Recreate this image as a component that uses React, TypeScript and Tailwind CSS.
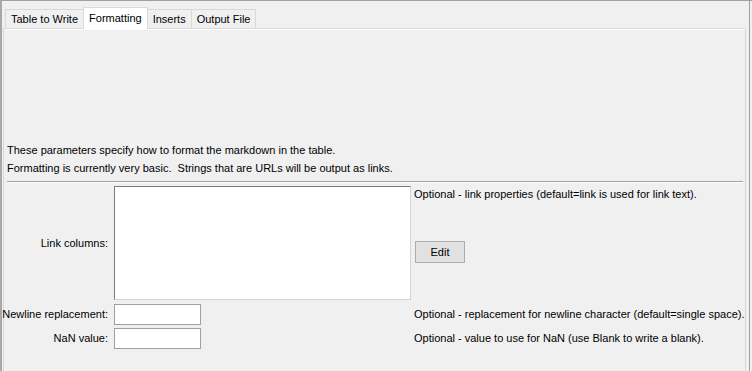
import React from 'react';

const font = { fontFamily: '"Liberation Sans", Arial, sans-serif' };

export default function App() {
  const tabs = ['Table to Write', 'Formatting', 'Inserts', 'Output File'];
  return (
    <div className="w-[752px] h-[371px] bg-[#f0f0f0] text-[11px] text-black overflow-hidden border-t border-[#a0a0a0] border-l-2 border-l-[#a8a8a8] relative whitespace-nowrap" style={font}>
      <div className="absolute right-[2px] top-0 bottom-0 w-px bg-[#a0a0a0]" />
      <div className="pl-px pr-[6px] pt-[6px]">
        {/* tab strip */}
        <div className="flex items-end h-[21px] pl-[2px]">
          {tabs.map((t, i) =>
            i === 1 ? (
              <div key={t} className="h-[22px] px-[5px] bg-white border border-b-0 border-[#d9d9d9] -mb-px -ml-px relative z-10 flex items-start pt-[3px] leading-[14px]">
                {t}
              </div>
            ) : (
              <div key={t} className="h-[19px] px-[5px] bg-[#f0f0f0] border border-b-0 border-[#d9d9d9] -ml-px first:ml-0 flex items-center leading-[14px]">
                {t}
              </div>
            )
          )}
        </div>
        {/* panel */}
        <div className="border border-[#d9d9d9] border-b-0 h-[345px]">
          <div className="border-t border-white h-full pl-[3px] pr-[2px]">
            <div className="h-[111px]" />
            <div className="leading-[18px]">
              <div>These parameters specify how to format the markdown in the table.</div>
              <div>Formatting is currently very basic.&nbsp; Strings that are URLs will be output as links.</div>
            </div>
            <div className="mt-[4px] h-[2px] bg-[#a0a0a0] border-b border-white" />
            <div className="grid grid-cols-[102px_299px_1fr] gap-x-[3px] mt-[3px]">
              <div className="flex items-center justify-end mr-px">Link columns:</div>
              <div className="h-[114px] bg-white border border-[#7a7a7a] border-r-[#d4d4d4] border-b-[#d4d4d4] ml-[2px]" />
              <div className="flex flex-col items-start">
                <div className="leading-[14px] mt-px">Optional - link properties (default=link is used for link text).</div>
                <button className="mt-[40px] ml-px w-[50px] h-[22px] bg-[#e1e1e1] border border-[#adadad]">Edit</button>
              </div>

              <div className="flex items-center justify-end mt-[4px] mr-px">Newline replacement:</div>
              <div className="mt-[4px] ml-[2px] w-[87px] h-[21px] bg-white border border-[#a0a0a0]" />
              <div className="flex items-center mt-[4px]">Optional - replacement for newline character (default=single space).</div>

              <div className="flex items-center justify-end mt-[3px] mr-px">NaN value:</div>
              <div className="mt-[3px] ml-[2px] w-[87px] h-[21px] bg-white border border-[#a0a0a0]" />
              <div className="flex items-center mt-[3px]">Optional - value to use for NaN (use Blank to write a blank).</div>
            </div>
          </div>
        </div>
      </div>
    </div>
  );
}
